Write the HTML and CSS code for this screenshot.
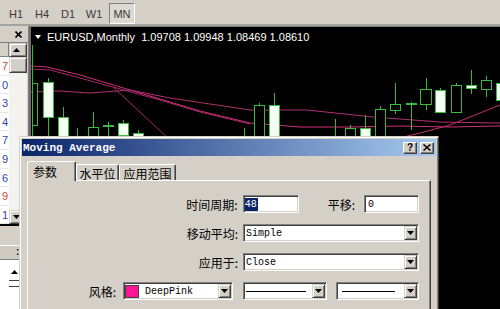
FILE: index.html
```html
<!DOCTYPE html>
<html>
<head>
<meta charset="utf-8">
<title>MetaTrader - Moving Average</title>
<link rel="stylesheet" href="styles.css">
</head>
<body>
<div class="toolbar">
  <span class="tb-btn">H1</span>
  <span class="tb-btn">H4</span>
  <span class="tb-btn">D1</span>
  <span class="tb-btn">W1</span>
  <span class="tb-btn pressed">MN</span>
</div>
<div class="main">
  <div class="left">
    <div class="lp-head">
      <svg class="lp-x" width="7" height="7" viewBox="0 0 7 7"><path d="M0.5 0.5L6.5 6.5M6.5 0.5L0.5 6.5" stroke="#000" stroke-width="1.6"/></svg>
    </div>
    <div class="lp-list">
      <div class="lp-col">
        <div class="lp-hcell"></div>
        <div class="lp-row red">7</div>
        <div class="lp-row blue">0</div>
        <div class="lp-row blue">3</div>
        <div class="lp-row blue">4</div>
        <div class="lp-row blue">7</div>
        <div class="lp-row blue">9</div>
        <div class="lp-row blue">6</div>
        <div class="lp-row red">9</div>
        <div class="lp-row blue">1</div>
      </div>
      <div class="lp-scroll">
        <div class="sb-btn"><svg width="7" height="4" viewBox="0 0 7 4"><polygon points="0,4 7,4 3.5,0" fill="#000"/></svg></div>
        <div class="sb-thumb"></div>
        <div class="sb-track"></div>
        <div class="sb-btn"><svg width="7" height="4" viewBox="0 0 7 4"><polygon points="0,0 7,0 3.5,4" fill="#000"/></svg></div>
      </div>
    </div>
    <div class="lp-gap"></div>
    <div class="lp2-head">:</div>
    <div class="lp2-body">
      <div class="lp2-col"></div>
      <div class="lp2-scroll">
        <div class="sb-btn2"><svg width="7" height="4" viewBox="0 0 7 4"><polygon points="0,4 7,4 3.5,0" fill="#000"/></svg></div>
        <div class="sb-thumb2"></div>
      </div>
    </div>
  </div>
  <div class="chart">
    <svg class="chart-svg" viewBox="31 27 469 282" width="469" height="282">
      <rect x="31" y="27" width="469" height="282" fill="#000"/>
      <g fill="none" stroke-width="1">
        <polyline stroke="#d0307a" points="31,66 47,67 80,75 120,87 160,99 200,111 250,123 300,127 350,127 400,126 450,127 500,126"/>
        <polyline stroke="#a82866" points="31,69 50,70 80,78 120,89 160,100 200,112 250,124"/>
        <polyline stroke="#b03070" points="31,92 60,91 90,93 130,90 170,98 210,104 250,110 307,110 373,117 440,122 500,123"/>
        <polyline stroke="#a03060" points="113,87 170,140"/>
        <polyline stroke="#c03070" points="395,139 420,133 450,125 475,115 500,105"/>
      </g>
      <path stroke="#3cb83c" stroke-width="1" fill="none" d="M32.5 45V140M48.5 78V140M63.5 107V140M77.5 128V140M93.5 112V140M108.5 122V140M123.5 120V140M138.5 130V140M244.5 128V140M259.5 103V140M274.5 93V140M335.5 119V140M350.5 125V140M365.5 115V140M380.5 106V140M395.5 83V114M411.5 102V130M426.5 78V110M440.5 88V113M456.5 83V113M471.5 70V94M486.5 76V97M500.5 80V104"/>
      <g stroke="#3cb83c" stroke-width="1">
        <rect class="bear" x="32.5" y="83.5" width="5" height="42"/>
        <rect class="bull" x="43.5" y="82.5" width="10" height="35"/>
        <rect class="bull" x="58.5" y="117.5" width="10" height="30"/>
        <rect class="bear" x="88.5" y="127.5" width="10" height="20"/>
        <rect class="bull" x="103.5" y="125.5" width="10" height="1"/>
        <rect class="bull" x="118.5" y="123.5" width="10" height="12"/>
        <rect class="bull" x="133.5" y="133.5" width="10" height="10"/>
        <rect class="bear" x="254.5" y="105.5" width="10" height="40"/>
        <rect class="bull" x="269.5" y="105.5" width="10" height="40"/>
        <rect class="bear" x="345.5" y="128.5" width="10" height="20"/>
        <rect class="bull" x="360.5" y="128.5" width="10" height="20"/>
        <rect class="bear" x="375.5" y="109.5" width="10" height="40"/>
        <rect class="bear" x="390.5" y="104.5" width="10" height="6"/>
        <rect class="bull" x="406.5" y="103.5" width="10" height="1"/>
        <rect class="bear" x="420.5" y="89.5" width="11" height="15"/>
        <rect class="bull" x="435.5" y="90.5" width="10" height="22"/>
        <rect class="bear" x="451.5" y="85.5" width="10" height="27"/>
        <rect class="bull" x="466.5" y="85.5" width="10" height="3"/>
        <rect class="bear" x="481.5" y="80.5" width="10" height="9"/>
        <rect class="bull" x="496.5" y="83.5" width="10" height="17"/>
      </g>
    </svg>
    <div class="chart-title">
      <svg class="ct-arrow" width="6" height="4" viewBox="0 0 6 4"><polygon points="0,0 6,0 3,4" fill="#fff"/></svg>
      <span class="ct-text">EURUSD,Monthly  1.09708 1.09948 1.08469 1.08610</span>
    </div>
  </div>
</div>

<div class="dialog">
  <div class="dlg-title">
    <span class="dlg-title-text">Moving Average</span>
    <span class="cap-btn cap-help">?</span>
    <span class="cap-btn cap-close"><svg width="8" height="7" viewBox="0 0 8 7"><path d="M0.5 0.5L7.5 6.5M7.5 0.5L0.5 6.5" stroke="#000" stroke-width="1.5"/></svg></span>
  </div>
  <div class="dlg-body">
    <div class="tabs">
      <span class="tab active">参数</span>
      <span class="tab tab-2">水平位</span>
      <span class="tab tab-3">应用范围</span>
    </div>
    <div class="panel">
      <div class="row">
        <span class="lbl">时间周期:</span>
        <span class="field f-period"><span class="selected">48</span></span>
        <span class="lbl lbl-shift">平移:</span>
        <span class="field f-shift">0</span>
      </div>
      <div class="row">
        <span class="lbl">移动平均:</span>
        <span class="sel s-wide"><span class="sel-text">Simple</span><span class="drop"><svg width="7" height="4" viewBox="0 0 7 4"><polygon points="0,0 7,0 3.5,4" fill="#000"/></svg></span></span>
      </div>
      <div class="row">
        <span class="lbl">应用于:</span>
        <span class="sel s-wide"><span class="sel-text">Close</span><span class="drop"><svg width="7" height="4" viewBox="0 0 7 4"><polygon points="0,0 7,0 3.5,4" fill="#000"/></svg></span></span>
      </div>
      <div class="row">
        <span class="lbl lbl-style">风格:</span>
        <span class="sel s-color"><span class="swatch"></span><span class="sel-text">DeepPink</span><span class="drop"><svg width="7" height="4" viewBox="0 0 7 4"><polygon points="0,0 7,0 3.5,4" fill="#000"/></svg></span></span>
        <span class="sel s-line"><span class="line"></span><span class="drop"><svg width="7" height="4" viewBox="0 0 7 4"><polygon points="0,0 7,0 3.5,4" fill="#000"/></svg></span></span>
        <span class="sel s-width"><span class="line line-w"></span><span class="drop"><svg width="7" height="4" viewBox="0 0 7 4"><polygon points="0,0 7,0 3.5,4" fill="#000"/></svg></span></span>
      </div>
    </div>
  </div>
</div>
</body>
</html>
```

FILE: styles.css
```css
* { box-sizing: border-box; }

body {
  margin: 0;
  width: 500px;
  height: 309px;
  overflow: hidden;
  position: relative;
  background: #d4d0c8;
  font-family: "Liberation Sans", Arial, sans-serif;
}

/* ---------- toolbar ---------- */
.toolbar {
  height: 26px;
  display: flex;
  align-items: flex-start;
  padding: 3px 0 0 3px;
  border-bottom: 2px solid #a5a39d;
}
.tb-btn {
  width: 26px;
  height: 21px;
  display: flex;
  align-items: center;
  justify-content: center;
  font-family: "Liberation Sans Narrow", "Liberation Sans", sans-serif;
  font-size: 11px;
  color: #3a3a3a;
}
.tb-btn.pressed {
  margin-left: 2px;
  border: 1px solid;
  border-color: #808080 #ffffff #ffffff #808080;
  background: #dcd9d2;
}

/* ---------- main ---------- */
.main {
  height: 283px;
  display: flex;
}

/* ---------- left panel ---------- */
.left {
  width: 29px;
  display: flex;
  flex-direction: column;
  border-right: 1px solid #808080;
}
.lp-head {
  height: 16px;
  display: flex;
  justify-content: flex-end;
  align-items: center;
  padding-right: 6px;
}
.lp-x { display: block; }
.lp-list {
  display: flex;
  border-top: 1px solid #808080;
  border-bottom: 2px solid #000;
}
.lp-col {
  width: 9px;
  background: #fff;
  overflow: hidden;
}
.lp-hcell {
  height: 14px;
  background: #d4d0c8;
  border-right: 1px solid #808080;
  border-bottom: 1px solid #808080;
}
.lp-row {
  height: 18.6px;
  border-bottom: 1px solid #e6e6e6;
  font-size: 11px;
  line-height: 18px;
  text-align: right;
  padding-right: 1px;
}
.red { color: #c84a3a; }
.blue { color: #2a48a8; }

.lp-scroll {
  width: 18px;
  display: flex;
  flex-direction: column;
  background: #f3f2ee;
}
.sb-btn {
  height: 14px;
  background: #d4d0c8;
  border: 1px solid;
  border-color: #d4d0c8 #404040 #404040 #d4d0c8;
  box-shadow: inset 1px 1px #fff, inset -1px -1px #808080;
  display: flex;
  align-items: center;
  justify-content: center;
  padding-right: 4px;
}
.sb-btn svg, .sb-btn2 svg, .drop svg { display: block; }
.sb-thumb {
  height: 16px;
  background: #d4d0c8;
  border: 1px solid;
  border-color: #d4d0c8 #404040 #404040 #d4d0c8;
  box-shadow: inset 1px 1px #fff, inset -1px -1px #808080;
}
.sb-track { flex: 1; }

.lp-gap { flex: 1; }
.lp2-head {
  height: 15px;
  background: #cfcbc3;
  border-top: 1px solid #fff;
  border-bottom: 1px solid #808080;
  font-size: 10px;
  font-weight: bold;
  line-height: 12px;
  padding-left: 16px;
}
.lp2-body {
  height: 49px;
  display: flex;
  background: #fff;
}
.lp2-col { width: 9px; }
.lp2-scroll {
  width: 11px;
  padding-top: 4px;
}
.sb-btn2 {
  height: 17px;
  display: flex;
  align-items: center;
  justify-content: center;
  border-bottom: 1px solid #404040;
}
.sb-thumb2 {
  margin-top: 5px;
  height: 2px;
  border-top: 1px solid #404040;
}

/* ---------- chart ---------- */
.chart {
  flex: 1;
  position: relative;
  background: #000;
  border-left: 2px solid #6c6c6c;
  border-top: 1px solid #808080;
  overflow: hidden;
}
.chart-svg { display: block; }
.chart-svg .bear { fill: #000; }
.chart-svg .bull { fill: #f2fff2; }
.chart-title {
  position: absolute;
  left: 4px;
  top: 4px;
  display: flex;
  align-items: center;
  color: #fff;
  font-family: "Liberation Sans Narrow", "Liberation Sans", sans-serif;
  font-size: 11px;
  white-space: pre;
}
.ct-arrow { display: block; margin-right: 6px; }

/* ---------- dialog ---------- */
.dialog {
  position: absolute;
  left: 19px;
  top: 136px;
  width: 420px;
  height: 180px;
  background: #d4d0c8;
  border: 1px solid;
  border-color: #d4d0c8 #404040 #404040 #d4d0c8;
  box-shadow: inset 1px 1px #fff, inset -1px -1px #808080;
  padding: 2px;
  display: flex;
  flex-direction: column;
}
.dlg-title {
  height: 17px;
  flex: none;
  display: flex;
  align-items: center;
  padding: 0 2px 0 1px;
  background: linear-gradient(to right, #0a246a, #a6caf0);
}
.dlg-title-text {
  flex: 1;
  color: #fff;
  font-family: "Liberation Mono", "Courier New", monospace;
  font-weight: bold;
  font-size: 11px;
}
.cap-btn {
  width: 14px;
  height: 12px;
  margin-left: 3px;
  display: flex;
  align-items: center;
  justify-content: center;
  background: #d4d0c8;
  border: 1px solid;
  border-color: #fff #404040 #404040 #fff;
  box-shadow: inset -1px -1px #808080;
  font-family: "Liberation Sans", Arial, sans-serif;
  font-weight: bold;
  font-size: 10px;
  color: #000;
}

.dlg-body {
  flex: 1;
  display: flex;
  flex-direction: column;
  padding: 5px 5px 0 5px;
}
.tabs {
  height: 19px;
  flex: none;
  display: flex;
  align-items: flex-end;
  position: relative;
  z-index: 1;
  font-family: "Noto Sans CJK SC", sans-serif;
  font-size: 12px;
}
.tab {
  height: 16px;
  display: flex;
  align-items: center;
  justify-content: center;
  padding-top: 2px;
  background: #d4d0c8;
  border: 1px solid;
  border-bottom: none;
  border-color: #fff #404040 transparent #fff;
  box-shadow: inset -1px 0 #808080;
  border-radius: 2px 2px 0 0;
  color: #000;
}
.tab.active {
  width: 49px;
  height: 20px;
  margin-bottom: -1px;
  padding: 0 0 0 5px;
  justify-content: flex-start;
}
.tab-2 { width: 43px; }
.tab-3 { width: 57px; }

.panel {
  flex: 1;
  border: 1px solid;
  border-color: #fff #404040 #404040 #fff;
  box-shadow: inset -1px -1px #808080;
  padding: 14px 11px 0 0;
  display: flex;
  flex-direction: column;
  gap: 11px;
}
.row {
  height: 18px;
  display: flex;
  justify-content: flex-end;
  align-items: center;
}
.lbl {
  font-family: "Noto Sans CJK SC", sans-serif;
  font-size: 12px;
  color: #000;
  margin-right: 5px;
}
.lbl-shift { margin-left: 29px; margin-right: 9px; }
.lbl-style { margin-right: 7px; }

.field, .sel {
  height: 18px;
  display: flex;
  align-items: center;
  background: #fff;
  border: 1px solid;
  border-color: #808080 #fff #fff #808080;
  box-shadow: inset 1px 1px #404040, inset -1px -1px #d4d0c8;
  font-family: "Liberation Mono", "Courier New", monospace;
  font-size: 10px;
  color: #000;
}
.field { padding-left: 1px; }
.f-period { width: 56px; }
.f-shift { width: 55px; padding-left: 3px; }
.selected {
  background: #0a246a;
  color: #fff;
  padding: 1px 1px 1px 0;
}
.sel { padding: 1px; }
.s-wide { width: 176px; }
.s-color { width: 110px; }
.s-line { width: 84px; margin-left: 10px; }
.s-width { width: 83px; margin-left: 9px; }
.sel-text { padding-left: 1px; }
.drop {
  width: 13px;
  height: 14px;
  margin-left: auto;
  display: flex;
  align-items: center;
  justify-content: center;
  background: #d4d0c8;
  border: 1px solid;
  border-color: #d4d0c8 #404040 #404040 #d4d0c8;
  box-shadow: inset 1px 1px #fff, inset -1px -1px #808080;
}
.swatch {
  width: 14px;
  height: 13px;
  margin-left: 0;
  margin-right: 5px;
  background: #ff1493;
  border: 1px solid #404040;
}
.line {
  flex: 1;
  height: 1px;
  background: #000;
  margin: 0 6px 0 1px;
}
.line-w { margin: 0 9px 0 4px; }
```
